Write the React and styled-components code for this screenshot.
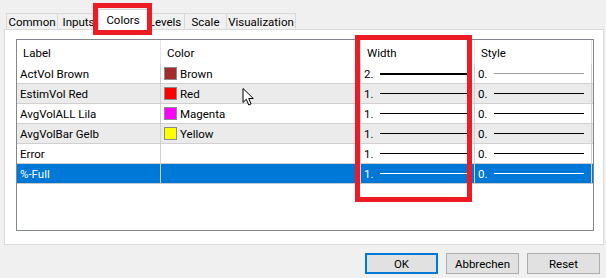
import styled, { createGlobalStyle } from 'styled-components';

const GlobalStyle = createGlobalStyle`
  html, body {
    margin: 0;
    padding: 0;
    background: #f0f0f0;
  }
  body {
    font-family: "Segoe UI", Roboto, "Noto Sans", sans-serif;
    font-size: 11.5px;
    color: #000;
  }
`;

const tabs = [
  { name: "Common", w: 52 },
  { name: "Inputs", w: 42 },
  { name: "Colors", w: 46 },
  { name: "Levels", w: 39 },
  { name: "Scale", w: 42 },
  { name: "Visualization", w: 69 },
];

const columns = ["Label", "Color", "Width", "Style"];

const rows = [
  { label: "ActVol Brown", swatch: "#a52a2a", color: "Brown", width: 2, style: 0 },
  { label: "EstimVol Red", swatch: "#ff0000", color: "Red", width: 1, style: 0 },
  { label: "AvgVolALL Lila", swatch: "#ff00ff", color: "Magenta", width: 1, style: 0 },
  { label: "AvgVolBar Gelb", swatch: "#ffff00", color: "Yellow", width: 1, style: 0 },
  { label: "Error", width: 1, style: 0 },
  { label: "%-Full", width: 1, style: 0, selected: true },
];

const App = () => {
  return (
    <>
      <GlobalStyle />
      <Dialog>
        <TabStrip>
          {tabs.map((t) => (
            <Tab key={t.name} $w={t.w} $active={t.name === "Colors"}>{t.name}</Tab>
          ))}
        </TabStrip>
        <Panel>
          <ListBox>
            <HeaderRow>
              {columns.map((c) => (
                <HeaderCell key={c}>{c}</HeaderCell>
              ))}
            </HeaderRow>
            {rows.map((r, i) => (
              <Row key={r.label} $alt={i % 2 === 1} $selected={r.selected}>
                <Cell>{r.label}</Cell>
                <Cell>
                  {r.swatch && <Swatch $color={r.swatch} />}
                  {r.color}
                </Cell>
                <Cell>
                  {r.width}.
                  <Line $thick={r.width === 2} />
                </Cell>
                <Cell>
                  {r.style}.
                  <Line $faint={i === 0} />
                </Cell>
              </Row>
            ))}
          </ListBox>
        </Panel>
        <ButtonBar>
          <Button $default>OK</Button>
          <Button>Abbrechen</Button>
          <Button>Reset</Button>
        </ButtonBar>

        {/* annotations drawn over the screenshot */}
        <Highlight style={{ left: 93, top: 3, width: 59, height: 32 }} />
        <Highlight style={{ left: 355, top: 35, width: 117, height: 167 }} />
        <Cursor viewBox="0 0 12 18" width="13" height="18">
          <path d="M0.5 0.5 L0.5 14.5 L3.8 11.3 L6.3 17 L8.6 16 L6.2 10.5 L10.8 10.5 Z" fill="#fff" stroke="#000" strokeWidth="1" strokeLinejoin="miter" />
        </Cursor>
      </Dialog>
    </>
  );
};

const Dialog = styled.div`
  position: relative;
  width: 606px;
  height: 278px;
  padding-top: 9px;
  box-sizing: border-box;
  overflow: hidden;
`;

const TabStrip = styled.div`
  display: flex;
  align-items: flex-end;
  padding-left: 6px;
  position: relative;
  z-index: 1;
`;

const Tab = styled.div`
  box-sizing: border-box;
  width: ${(p) => (p.$active ? p.$w + 4 : p.$w)}px;
  height: ${(p) => (p.$active ? "22px" : "17px")};
  padding: ${(p) => (p.$active ? "0 0 2px" : "1px 0 0")};
  margin: ${(p) => (p.$active ? "0 -2px -1px" : "0")};
  display: flex;
  align-items: center;
  justify-content: center;
  background: ${(p) => (p.$active ? "#fff" : "#f0f0f0")};
  border: 1px solid #d9d9d9;
  border-bottom: ${(p) => (p.$active ? "none" : "1px solid #d9d9d9")};
  border-left: ${(p) => (p.$active ? "1px solid #d9d9d9" : "none")};
  z-index: ${(p) => (p.$active ? 2 : 0)};
  &:first-child {
    border-left: 1px solid #d9d9d9;
  }
`;

const Panel = styled.div`
  margin-left: 4px;
  width: 600px;
  height: 216px;
  box-sizing: border-box;
  margin-top: -1px;
  background: #fff;
  border: 1px solid #d9d9d9;
  padding: 9px 9px 0 11px;
`;

const ListBox = styled.div`
  width: 578px;
  height: 192px;
  box-sizing: border-box;
  border: 1px solid #828790;
  background: #fff;
`;

const HeaderRow = styled.div`
  display: grid;
  grid-template-columns: 144px 200px 114px 117px;
  height: 24px;
`;

const HeaderCell = styled.div`
  display: flex;
  align-items: center;
  padding: 2px 0 0 6px;
  border-right: 1px solid #e5e5e5;
`;

const Row = styled.div`
  display: grid;
  grid-template-columns: 144px 200px 114px 117px;
  height: 20px;
  box-sizing: border-box;
  border-bottom: 1px solid ${(p) => (p.$selected ? "#c8c8c8" : "#d0d0d0")};
  background: ${(p) => (p.$selected ? "#0078d7" : p.$alt ? "#ebebeb" : "#fff")};
  color: ${(p) => (p.$selected ? "#fff" : "#000")};
`;

const Cell = styled.div`
  display: flex;
  align-items: center;
  padding: 1px 0 0 3px;
  border-right: 1px solid #d0d0d0;
  white-space: nowrap;
  overflow: hidden;
`;

const Swatch = styled.span`
  display: inline-block;
  width: 11px;
  height: 11px;
  margin: -1px 3px 0 0;
  background: ${(p) => p.$color};
  border: 1px solid #8c8c8c;
`;

const Line = styled.span`
  flex: 1;
  margin: -1px 7px 0 6px;
  height: ${(p) => (p.$thick ? "2px" : "1px")};
  background: ${(p) => (p.$faint ? "#a0a0a0" : "currentColor")};
`;

const ButtonBar = styled.div`
  display: flex;
  justify-content: flex-end;
  gap: 8px;
  padding: 8px 6px 0 0;
`;

const Button = styled.button`
  width: 73px;
  height: 21px;
  box-sizing: border-box;
  font: inherit;
  color: #000;
  background: #e1e1e1;
  border: ${(p) => (p.$default ? "2px solid #0078d7" : "1px solid #adadad")};
  padding: 0;
`;

const Highlight = styled.div`
  position: absolute;
  box-sizing: border-box;
  border: 5px solid #ed1c24;
  z-index: 5;
`;

const Cursor = styled.svg`
  position: absolute;
  left: 242px;
  top: 88px;
  z-index: 6;
`;

export default App;
